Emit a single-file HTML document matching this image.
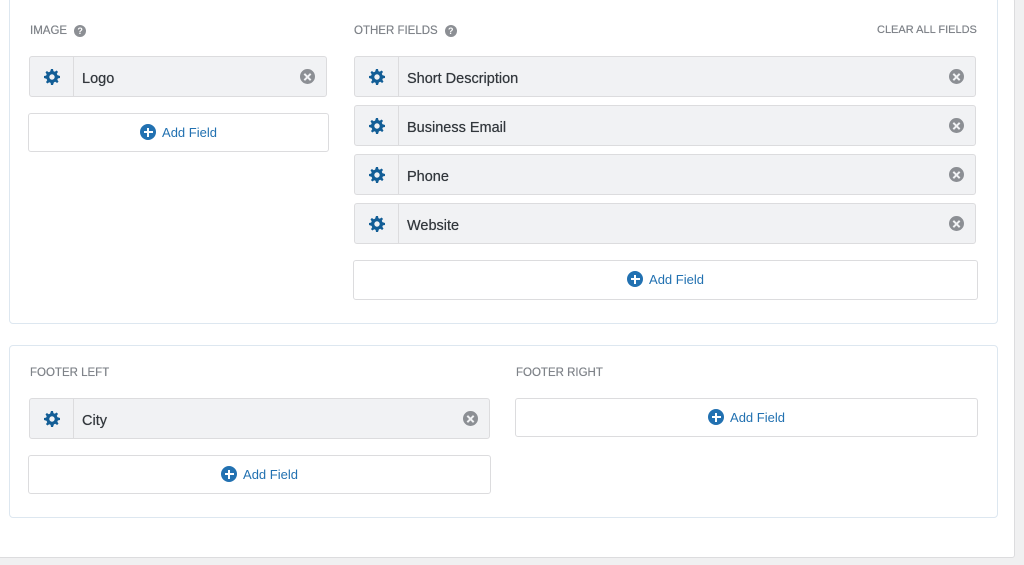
<!DOCTYPE html><html><head><style>
*{box-sizing:border-box;margin:0;padding:0}
body{width:1024px;height:565px;background:#f0f0f1;position:relative;overflow:hidden;font-family:"Liberation Sans",sans-serif}
.outer{position:absolute;left:-2px;top:-2px;width:1017px;height:560px;background:#fff;border:1px solid #dcdcde;border-radius:3px}
.panel{position:absolute;border:1.5px solid #dde7f0;border-radius:4px;background:#fff}
.lbl{position:absolute;font-size:11.5px;color:#7e8288;text-shadow:0 0 .4px #7e8288}
.q{display:inline-block;width:12px;height:12px;border-radius:50%;background:#8c8f94;color:#fff;font-size:9px;font-weight:bold;text-align:center;line-height:12px;margin-left:7px;vertical-align:0}
.row{position:absolute;height:41px;background:#f1f2f4;border:1px solid #dcdcde;border-radius:3px}
.row .g{position:absolute;left:0;top:0;width:44px;height:39px;border-right:1px solid #dcdcde}
.row .g svg{position:absolute;left:14px;top:12px}
.row .t{position:absolute;left:52px;top:14px;font-size:14.5px;color:#32373c;text-shadow:0 0 .5px #32373c}
.row .x{position:absolute;right:11px;top:12px;width:15px;height:15px;border-radius:50%;background:#8c8f94}
.row .x:before,.row .x:after{content:"";position:absolute;left:3px;top:6.5px;width:9px;height:2px;background:#f1f2f4;transform:rotate(45deg)}
.row .x:after{transform:rotate(-45deg)}
.add{position:absolute;height:40px;background:#fff;border:1px solid #dcdcde;border-radius:3px;text-align:center;font-size:13px;color:#2271b1;line-height:38px}
.add i{display:inline-block;width:16px;height:16px;border-radius:50%;background:#2271b1;vertical-align:-3px;margin-right:6px;position:relative}
.add i:before,.add i:after{content:"";position:absolute;background:#fff;left:3.5px;top:7px;width:9px;height:2px}
.add i:after{left:7px;top:3.5px;width:2px;height:9px}
</style></head><body>
<div class="outer"></div>
<div class="panel" style="left:9px;top:-10px;width:989px;height:334px"></div>
<div class="panel" style="left:9px;top:345px;width:989px;height:173px"></div>

<svg width="0" height="0" style="position:absolute"><defs><g id="gear"><path fill="#135e96" d="M7 0h2l.4 2.1 1.4.6 1.8-1.2 1.4 1.4-1.2 1.8.6 1.4L16 7v2l-2.1.4-.6 1.4 1.2 1.8-1.4 1.4-1.8-1.2-1.4.6L9 16H7l-.4-2.1-1.4-.6-1.8 1.2-1.4-1.4 1.2-1.8-.6-1.4L0 9V7l2.1-.4.6-1.4-1.2-1.8 1.4-1.4 1.8 1.2 1.4-.6z M8 5.3a2.7 2.7 0 1 0 0 5.4a2.7 2.7 0 1 0 0-5.4z" fill-rule="evenodd"/></g></defs></svg>

<div class="lbl" style="left:30px;top:25px">IMAGE<span class="q">?</span></div>
<div class="lbl" style="left:354px;top:25px">OTHER FIELDS<span class="q">?</span></div>
<div class="lbl" style="left:877px;top:24px;font-size:11px">CLEAR ALL FIELDS</div>

<div class="row" style="left:29px;top:56px;width:298px"><div class="g"><svg width="16" height="16"><use href="#gear"/></svg></div><div class="t">Logo</div><div class="x"></div></div>
<div class="add" style="left:28px;top:113px;width:301px;height:39px"><i></i>Add Field</div>

<div class="row" style="left:354px;top:56px;width:622px"><div class="g"><svg width="16" height="16"><use href="#gear"/></svg></div><div class="t">Short Description</div><div class="x"></div></div>
<div class="row" style="left:354px;top:105px;width:622px"><div class="g"><svg width="16" height="16"><use href="#gear"/></svg></div><div class="t">Business Email</div><div class="x"></div></div>
<div class="row" style="left:354px;top:154px;width:622px"><div class="g"><svg width="16" height="16"><use href="#gear"/></svg></div><div class="t">Phone</div><div class="x"></div></div>
<div class="row" style="left:354px;top:203px;width:622px"><div class="g"><svg width="16" height="16"><use href="#gear"/></svg></div><div class="t">Website</div><div class="x"></div></div>
<div class="add" style="left:353px;top:260px;width:625px"><i></i>Add Field</div>

<div class="lbl" style="left:30px;top:367px">FOOTER LEFT</div>
<div class="lbl" style="left:516px;top:367px">FOOTER RIGHT</div>
<div class="row" style="left:29px;top:398px;width:461px"><div class="g"><svg width="16" height="16"><use href="#gear"/></svg></div><div class="t">City</div><div class="x"></div></div>
<div class="add" style="left:28px;top:455px;width:463px;height:39px"><i></i>Add Field</div>
<div class="add" style="left:515px;top:398px;width:463px;height:39px"><i></i>Add Field</div>
</body></html>
